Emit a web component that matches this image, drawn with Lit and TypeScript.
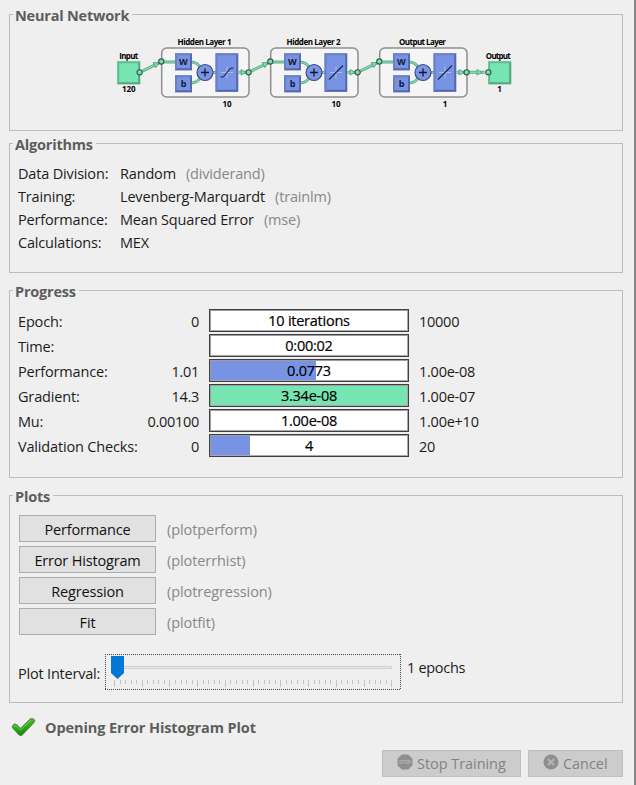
import { LitElement, html, svg, css, nothing } from "lit";
import { customElement, property } from "lit/decorators.js";

@customElement("network-diagram")
class NetworkDiagram extends LitElement {
  static styles = css`
    :host { display: block; }
    svg { display: block; letter-spacing: 0; }
    .caption { font: 700 8px "Open Sans", "Noto Sans", sans-serif; fill: #000; text-anchor: middle; }
    .glyph { font: 700 9px "Open Sans", "Noto Sans", sans-serif; fill: #111a33; text-anchor: middle; }
    .wire { stroke: #5fae88; stroke-width: 3; fill: none; }
    .core { stroke: #86dfb4; stroke-width: 1.2; fill: none; }
    .tip { fill: #86e0b5; stroke: #4c9a74; stroke-width: 0.8; }
    .port { fill: #82d9ae; stroke: #2f5f48; stroke-width: 1.1; }
    .frame { fill: #f5f5f5; stroke: #8f8f8f; stroke-width: 1.5; }
    .sum { fill: #7b95e6; stroke: #3d4b7c; stroke-width: 1.2; }
    .plus { stroke: #10182e; stroke-width: 1.3; }
    .axis { stroke: #a9bbf2; stroke-width: 1; }
    .curve { stroke: #1b2340; stroke-width: 1.1; fill: none; }
  `;

  private block(x: number, y: number, w: number, h: number, fill: string, light: string, dark: string) {
    return svg`
      <rect x=${x} y=${y} width=${w} height=${h} fill=${fill}></rect>
      <path d="M${x} ${y + h}V${y}H${x + w}l-2 2H${x + 2}V${y + h - 2}z" fill=${light}></path>
      <path d="M${x} ${y + h}H${x + w}V${y}l-2 2V${y + h - 2}H${x + 2}z" fill=${dark}></path>`;
  }

  private blue(x: number, y: number, w: number, h: number) {
    return this.block(x, y, w, h, "#7893e4", "#6a80c4", "#566aa8");
  }

  private green(x: number, y: number) {
    return this.block(x, y, 23, 23, "#77e5b2", "#63bd94", "#56a581");
  }

  private wire(x1: number, y1: number, x2: number, y2: number) {
    const angle = (Math.atan2(y2 - y1, x2 - x1) * 180) / Math.PI;
    return svg`
      <line class="wire" x1=${x1} y1=${y1} x2=${x2} y2=${y2}></line>
      <line class="core" x1=${x1} y1=${y1} x2=${x2} y2=${y2}></line>
      <path class="tip" d="M-7.5 -2.8L-2.6 0L-7.5 2.8z" transform="translate(${x2} ${y2}) rotate(${angle})"></path>`;
  }

  private layer(x: number, title: string, size: string, curve: string) {
    const inner = `M${x} 52H${x + 15}M${x + 30} 52Q${x + 36} 52 ${x + 40} 58M${x + 30} 73Q${x + 36} 73 ${x + 40} 67M${x + 50} 62.5H${x + 56}`;
    return svg`
      <text class="caption" x=${x + 43.5} y="34.5" textLength=${title.length > 12 ? 54 : 47}>${title}</text>
      <rect class="frame" x=${x + 0.7} y="38" width="87.3" height="49" rx="5"></rect>
      <path class="wire" d=${inner}></path>
      <path class="core" d=${inner}></path>
      ${this.blue(x + 14, 43.3, 17, 17)}
      ${this.blue(x + 14, 65.3, 17, 17)}
      <text class="glyph" x=${x + 22.3} y="55">W</text>
      <text class="glyph" x=${x + 22.5} y="77">b</text>
      <circle class="sum" cx=${x + 44} cy="62.5" r="8"></circle>
      <path class="plus" d="M${x + 40} 62.5h8M${x + 44} 58.5v8"></path>
      ${this.blue(x + 54.5, 43.3, 22.7, 38.5)}
      <path class="axis" d="M${x + 60} 62.5h12M${x + 66} 56.5v12"></path>
      <path class="curve" d=${curve} transform="translate(${x + 66} 62.5)"></path>
      ${this.wire(x + 77.5, 62.3, x + 87.6, 62.3)}
      <text class="caption" x=${x + 66} y="96.5">${size}</text>`;
  }

  render() {
    const s = "M-6.5 4.5H-5C-1 4.5 1 -4.5 5 -4.5H6.5";
    const line = "M-7 7L7 -7";
    return html`<svg width="400" height="102" viewBox="0 0 400 102" role="img" aria-label="Network diagram">
      <text class="caption" x="12.8" y="48.5" textLength="19">Input</text>
      ${this.green(1.2, 51.3)}
      <text class="caption" x="12.8" y="81.5">120</text>
      ${this.layer(45, "Hidden Layer 1", "10", s)}
      ${this.layer(154, "Hidden Layer 2", "10", line)}
      ${this.layer(263, "Output Layer", "1", line)}
      ${this.wire(23.7, 62.3, 45.3, 51.8)}
      ${this.wire(132.6, 62.3, 154.3, 51.8)}
      ${this.wire(241.6, 62.3, 263.3, 51.8)}
      ${this.green(372.2, 51.3)}
      ${this.wire(350.6, 62.3, 368.5, 62.3)}
      ${[[23.6, 62.3], [45.3, 51.5], [132.6, 62.3], [154.3, 51.5], [241.6, 62.3], [263.3, 51.5], [350.6, 62.3], [372.3, 62.3]].map(
        ([x, y]) => svg`<circle class="port" cx=${x} cy=${y} r="2.6"></circle>`
      )}
      <text class="caption" x="382.3" y="48.5" textLength="25">Output</text>
      <text class="caption" x="383.5" y="81.5">1</text>
    </svg>`;
  }
}

@customElement("group-box")
class GroupBox extends LitElement {
  @property() label = "";
  static styles = css`
    :host { display: block; box-sizing: border-box; border: 1px solid #bcbcbc; }
    .title { display: flex; width: max-content; height: 20px; margin: -9px 0 -1px 3px; padding: 0 3px 0 2px; align-items: center; background: #efefef; color: #5c5e5c; font-size: 14.5px; font-weight: 700; line-height: 20px; letter-spacing: -0.2px; white-space: nowrap; }
  `;
  render() {
    return html`<div class="title">${this.label}</div><slot></slot>`;
  }
}

@customElement("interval-slider")
class IntervalSlider extends LitElement {
  static styles = css`
    :host { display: block; }
    svg { display: block; }
    .focus { stroke: #4a4a4a; stroke-width: 1; stroke-dasharray: 1 1; }
    .track { fill: #e7eaea; stroke: #d0d0d0; }
    .tick { stroke: #c2c2c2; stroke-width: 1; }
    .thumb { fill: #0078d7; }
  `;
  render() {
    const ticks = Array.from({ length: 51 }, (_, i) => i);
    return html`<svg width="296" height="37" viewBox="0 0 296 37">
      <line class="focus" x1="0" y1="0.5" x2="296" y2="0.5"></line>
      <line class="focus" x1="0" y1="35.5" x2="296" y2="35.5"></line>
      <line class="focus" x1="0.5" y1="0" x2="0.5" y2="36"></line>
      <line class="focus" x1="295.5" y1="0" x2="295.5" y2="36"></line>
      <rect class="track" x="8.5" y="12.5" width="278" height="2"></rect>
      ${ticks.map((i) => {
        const x = Math.round(9 + i * 5.546) + 0.5;
        return svg`<line class="tick" x1=${x} x2=${x} y1="26" y2=${i % 5 ? 30 : 33}></line>`;
      })}
      <path class="thumb" d="M6 2H19V19L12.5 25L6 19z"></path>
    </svg>`;
  }
}

const ALGORITHMS = [
  ["Data Division:", "Random", "(dividerand)"],
  ["Training:", "Levenberg-Marquardt", "(trainlm)"],
  ["Performance:", "Mean Squared Error", "(mse)"],
  ["Calculations:", "MEX", ""],
];

const PROGRESS = [
  { name: "Epoch:", from: "0", value: "10 iterations", to: "10000", fill: 0, tone: "blue" },
  { name: "Time:", from: "", value: "0:00:02", to: "", fill: 0, tone: "blue" },
  { name: "Performance:", from: "1.01", value: "0.0773", to: "1.00e-08", fill: 53.5, tone: "blue" },
  { name: "Gradient:", from: "14.3", value: "3.34e-08", to: "1.00e-07", fill: 100, tone: "green" },
  { name: "Mu:", from: "0.00100", value: "1.00e-08", to: "1.00e+10", fill: 0, tone: "blue" },
  { name: "Validation Checks:", from: "0", value: "4", to: "20", fill: 20, tone: "blue" },
];

const PLOTS = [
  ["Performance", "(plotperform)"],
  ["Error Histogram", "(ploterrhist)"],
  ["Regression", "(plotregression)"],
  ["Fit", "(plotfit)"],
];

@customElement("app-root")
class AppRoot extends LitElement {
  static styles = css`
    :host { display: block; box-sizing: border-box; width: 636px; height: 785px; overflow: hidden; padding: 14px 11px 0 9px; background: #efefef; border-right: 2px solid #858789; font: 14.5px/20px "Open Sans", "Noto Sans", sans-serif; letter-spacing: -0.17px; color: #1c1c1c; white-space: nowrap; }
    * { box-sizing: border-box; }
    .network { height: 117px; margin-bottom: 12px; }
    .algorithms { height: 130px; margin-bottom: 17px; }
    .progress { height: 188px; margin-bottom: 17px; }
    .plots { height: 208px; }
    .diagram { margin: -16px 0 0 106px; }
    .dim { color: #888; }
    .rows { padding: 8px 0 0 8px; }
    .algo { display: flex; height: 23px; align-items: center; }
    .algo-name { width: 102px; }
    .algo-code { margin-left: 10px; }
    .meters { display: grid; grid-template-columns: 122px 60px 209px 1fr; grid-auto-rows: 25px; align-items: center; padding: 7px 0 0 8px; }
    .name { padding-top: 2px; }
    .from { text-align: right; padding: 2px 1px 0 0; letter-spacing: -0.3px; }
    .meter { position: relative; height: 23px; margin-left: 9px; width: 200px; border: 1px solid #3e4043; background: #fff; }
    .bar { height: 21px; border: 1px solid #8d9095; border-color: #9c9c9c #a8a8a8 #a8a8a8 #9c9c9c; }
    .fill { height: 100%; }
    .blue { background: #7893e4; }
    .green { background: #77e5b2; }
    .value { position: absolute; inset: 0; text-align: center; line-height: 21px; color: #000; font-weight: 500; letter-spacing: -0.25px; -webkit-text-stroke: 0.2px #000; }
    .to { padding: 2px 0 0 10px; letter-spacing: -0.25px; }
    .plot { display: flex; height: 31px; align-items: flex-start; }
    .plot-list { padding: 9px 0 0 9px; }
    .button { display: flex; width: 137px; height: 27px; padding-top: 2px; border: 1px solid #adadad; background: #e1e1e1; align-items: center; justify-content: center; color: #111; }
    .plot-code { margin: 5px 0 0 11px; letter-spacing: -0.08px; }
    .interval { display: flex; margin: 15px 0 0 8px; }
    .interval-name { width: 87px; padding-top: 10px; letter-spacing: -0.2px; }
    .interval-value { padding: 4px 0 0 6px; letter-spacing: -0.3px; }
    .status { display: flex; height: 32px; margin: 9px 0 0 2px; align-items: center; color: #5c5e5c; font-weight: 700; letter-spacing: -0.1px; }
    .status-text { margin-left: 9px; }
    .actions { display: flex; justify-content: flex-end; gap: 7px; margin-top: 6px; }
    .action { display: flex; height: 27px; align-items: center; border: 1px solid #bfbfbf; background: #ccc; color: #838383; padding-left: 14px; gap: 4px; }
    .stop { width: 139px; }
    .cancel { width: 95px; }
    .action svg { margin-top: -4px; }
    .action-text { padding-top: 1px; letter-spacing: -0.05px; }
    .stop-word { font: 700 5px "Open Sans", sans-serif; fill: #b5b5b5; letter-spacing: 0; }
  `;

  render() {
    return html`
      <group-box class="network" label="Neural Network"><network-diagram class="diagram"></network-diagram></group-box>
      <group-box class="algorithms" label="Algorithms">
        <div class="rows">
          ${ALGORITHMS.map(([name, value, code]) => html`<div class="algo"><span class="algo-name">${name}</span><span>${value}</span>${code ? html`<span class="algo-code dim">${code}</span>` : nothing}</div>`)}
        </div>
      </group-box>
      <group-box class="progress" label="Progress">
        <div class="meters">
          ${PROGRESS.map((m) => html`
            <span class="name">${m.name}</span><span class="from">${m.from}</span>
            <div class="meter"><div class="bar"><div class="fill ${m.tone}" style="width:${m.fill}%"></div></div><div class="value">${m.value}</div></div>
            <span class="to">${m.to}</span>`)}
        </div>
      </group-box>
      <group-box class="plots" label="Plots">
        <div class="plot-list">
          ${PLOTS.map(([name, code]) => html`<div class="plot"><div class="button">${name}</div><span class="plot-code dim">${code}</span></div>`)}
        </div>
        <div class="interval"><span class="interval-name">Plot Interval:</span><interval-slider></interval-slider><span class="interval-value">1 epochs</span></div>
      </group-box>
      <div class="status">
        <svg width="25" height="20" viewBox="0 0 25 20">
          <defs><linearGradient id="tick" x1="0" y1="0" x2="0.3" y2="1"><stop offset="0" stop-color="#5fd038"></stop><stop offset="0.55" stop-color="#35a81f"></stop><stop offset="1" stop-color="#1e8512"></stop></linearGradient></defs>
          <path d="M1.3 8Q3.5 4.5 6 6.7L9.5 10.3L19.3 0.8Q21.5 -0.3 23.6 1.8Q24.2 3.4 22.8 4.8L11.8 16.6Q9.7 18.6 7.8 16.7L1.8 10.2Q0.9 9 1.3 8z" fill="url(#tick)" stroke="#2f7a22" stroke-width="0.7"></path>
          <path d="M3 8.4Q4.3 6.7 5.8 8.4L9.4 12L20 2.2" fill="none" stroke="#8fe36c" stroke-width="1" opacity="0.7"></path>
        </svg>
        <span class="status-text">Opening Error Histogram Plot</span>
      </div>
      <div class="actions">
        <div class="action stop">
          <svg width="16" height="16" viewBox="0 0 16 16"><path d="M4.8 0.5h6.4l4.3 4.3v6.4l-4.3 4.3H4.8L0.5 11.2V4.8z" fill="#8f8f8f"></path><text class="stop-word" x="8" y="9.6" text-anchor="middle" textLength="12">STOP</text></svg>
          <span class="action-text">Stop Training</span>
        </div>
        <div class="action cancel">
          <svg width="16" height="16" viewBox="0 0 16 16"><circle cx="8" cy="8" r="7.5" fill="#8f8f8f"></circle><path d="M5 5l6 6M11 5l-6 6" stroke="#b4b4b4" stroke-width="2"></path></svg>
          <span class="action-text">Cancel</span>
        </div>
      </div>`;
  }
}
